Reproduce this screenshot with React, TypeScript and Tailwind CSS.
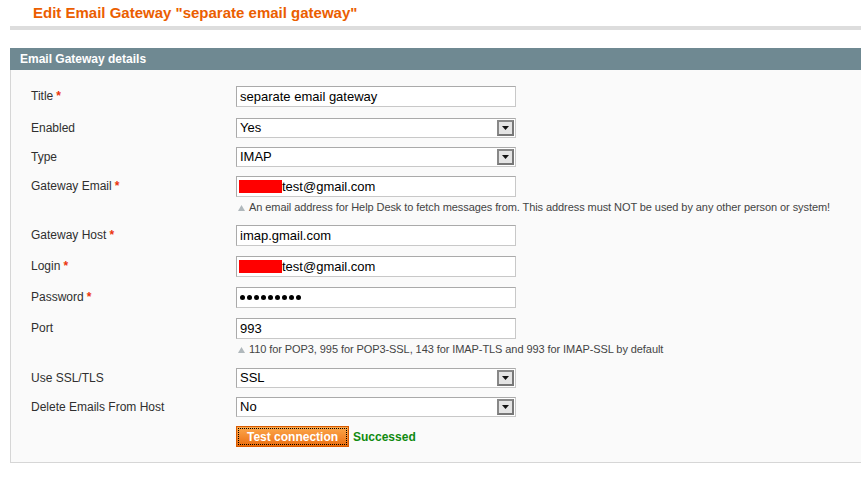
import React from 'react';

const font = { fontFamily: '"Liberation Sans", Arial, sans-serif' };

function Req() {
  return <span className="ml-[3px] font-bold text-[#eb340a]">*</span>;
}

function Label({ text, required }: { text: string; required?: boolean }) {
  return (
    <div className="w-[205px] shrink-0 pt-[1px] text-[12px] leading-[18px] text-[#2f2f2f]">
      {text}
      {required && <Req />}
    </div>
  );
}

function TextBox({ value, masked }: { value: string; masked?: boolean }) {
  return (
    <div className="flex h-[21px] w-[280px] items-center border border-[#aaa] border-b-[#c8c8c8] border-r-[#c8c8c8] bg-white pl-[2px] text-[13px] text-black">
      {masked && <span className="inline-block h-[13px] w-[43px] bg-[#ff0000]" />}
      <span className={masked ? '' : 'pl-[1px]'}>{value}</span>
    </div>
  );
}

function Dots() {
  return (
    <div className="flex h-[21px] w-[280px] items-center gap-[2px] border border-[#aaa] border-b-[#c8c8c8] border-r-[#c8c8c8] bg-white pl-[3px]">
      {Array.from({ length: 9 }).map((_, i) => (
        <span key={i} className="inline-block h-[5px] w-[5px] rounded-full bg-black" />
      ))}
    </div>
  );
}

function Select({ value }: { value: string }) {
  return (
    <div className="flex h-[20px] w-[280px] items-center justify-between border border-[#aaa] border-b-[#c8c8c8] border-r-[#c8c8c8] bg-white pl-[3px] text-[13px] text-black">
      <span>{value}</span>
      <span className="mr-[1px] flex h-[16px] w-[17px] items-center justify-center border-2 border-[#888] border-b-[#777] border-r-[#777] bg-[#e4e4e4]">
        <svg width="7" height="4" viewBox="0 0 7 4">
          <path d="M0 0h7L3.5 4z" fill="#111" />
        </svg>
      </span>
    </div>
  );
}

function Note({ text }: { text: string }) {
  return (
    <div className="mt-[4px] flex items-center pl-[2px] text-[11px] leading-[13px] tracking-[-0.08px] text-[#444]">
      <svg width="7" height="6" viewBox="0 0 7 6" className="mr-[4px]">
        <path d="M3.5 0L7 6H0z" fill="#b0b8bc" />
      </svg>
      {text}
    </div>
  );
}

function Row({
  label,
  required,
  children,
  mt,
}: {
  label: string;
  required?: boolean;
  children: React.ReactNode;
  mt: string;
}) {
  return (
    <div className={`flex ${mt}`}>
      <Label text={label} required={required} />
      <div>{children}</div>
    </div>
  );
}

export default function App() {
  return (
    <div className="h-[483px] w-[861px] overflow-hidden bg-white" style={font}>
      <div className="ml-[10px] w-[880px]">
        <div className="border-b-4 border-[#ddd] pb-[5px] pl-[23px] pt-[4px]">
          <h3 className="text-[15px] font-bold leading-[17px] text-[#eb5e00]">
            Edit Email Gateway "separate email gateway"
          </h3>
        </div>
        <div className="mt-[18px] h-[22px] bg-[#6f8992] pl-[10px] text-[12px] font-bold leading-[22px] text-white">
          Email Gateway details
        </div>
        <div className="h-[393px] border border-t-0 border-[#d6d6d6] bg-[#fafafa] pl-[20px] pt-[16px]">
          <Row label="Title" required mt="mt-0">
            <TextBox value="separate email gateway" />
          </Row>
          <Row label="Enabled" mt="mt-[11px]">
            <Select value="Yes" />
          </Row>
          <Row label="Type" mt="mt-[9px]">
            <Select value="IMAP" />
          </Row>
          <Row label="Gateway Email" required mt="mt-[9px]">
            <TextBox value="test@gmail.com" masked />
            <Note text="An email address for Help Desk to fetch messages from. This address must NOT be used by any other person or system!" />
          </Row>
          <Row label="Gateway Host" required mt="mt-[11px]">
            <TextBox value="imap.gmail.com" />
          </Row>
          <Row label="Login" required mt="mt-[10px]">
            <TextBox value="test@gmail.com" masked />
          </Row>
          <Row label="Password" required mt="mt-[10px]">
            <Dots />
          </Row>
          <Row label="Port" mt="mt-[10px]">
            <TextBox value="993" />
            <Note text="110 for POP3, 995 for POP3-SSL, 143 for IMAP-TLS and 993 for IMAP-SSL by default" />
          </Row>
          <Row label="Use SSL/TLS" mt="mt-[12px]">
            <Select value="SSL" />
          </Row>
          <Row label="Delete Emails From Host" mt="mt-[9px]">
            <Select value="No" />
          </Row>
          <div className="mt-[9px] flex items-center pl-[205px]">
            <button
              type="button"
              className="flex h-[21px] w-[113px] items-center justify-center border border-[#d85a00] bg-gradient-to-b from-[#fca84a] to-[#eb6d07] p-[1px]"
            >
              <span className="flex h-full w-full items-center justify-center border border-dotted border-black text-[12px] font-bold text-white">
                Test connection
              </span>
            </button>
            <span className="ml-[4px] text-[12px] font-bold text-[#108a10]">Successed</span>
          </div>
        </div>
      </div>
    </div>
  );
}
